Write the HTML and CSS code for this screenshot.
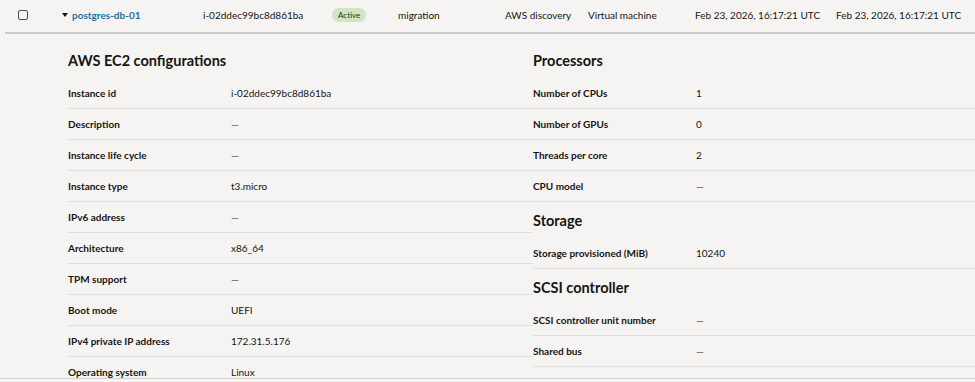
FILE: index.html
```html
<!DOCTYPE html>
<html lang="en">
  <head>
    <meta charset="UTF-8" />
    <meta name="viewport" content="width=device-width, initial-scale=1.0" />
    <title>Assets</title>

    <link rel="stylesheet" href="styles.css">
  </head>
  <body>
    <div class="asset-row">
      <span class="cell"><span class="checkbox"></span></span>
      <span class="cell name">
        <svg class="caret" width="6" height="4" viewBox="0 0 6 4"><path d="M0 0h6L3 4z" fill="#161513" /></svg>
        <a href="#">postgres-db-01</a>
      </span>
      <span class="cell">i-02ddec99bc8d861ba</span>
      <span class="cell"><span class="badge">Active</span></span>
      <span class="cell">migration</span>
      <span class="cell">AWS discovery</span>
      <span class="cell">Virtual machine</span>
      <span class="cell">Feb 23, 2026, 16:17:21 UTC</span>
      <span class="cell">Feb 23, 2026, 16:17:21 UTC</span>
    </div>

    <div class="details">
      <div class="column">
        <h2>AWS EC2 configurations</h2>
        <div class="prop"><span class="label">Instance id</span><span>i-02ddec99bc8d861ba</span></div>
        <div class="prop"><span class="label">Description</span><span class="dash">—</span></div>
        <div class="prop"><span class="label">Instance life cycle</span><span class="dash">—</span></div>
        <div class="prop"><span class="label">Instance type</span><span>t3.micro</span></div>
        <div class="prop"><span class="label">IPv6 address</span><span class="dash">—</span></div>
        <div class="prop"><span class="label">Architecture</span><span>x86_64</span></div>
        <div class="prop"><span class="label">TPM support</span><span class="dash">—</span></div>
        <div class="prop"><span class="label">Boot mode</span><span>UEFI</span></div>
        <div class="prop"><span class="label">IPv4 private IP address</span><span>172.31.5.176</span></div>
        <div class="prop"><span class="label">Operating system</span><span>Linux</span></div>
      </div>

      <div class="column">
        <h2>Processors</h2>
        <div class="prop"><span class="label">Number of CPUs</span><span>1</span></div>
        <div class="prop"><span class="label">Number of GPUs</span><span>0</span></div>
        <div class="prop"><span class="label">Threads per core</span><span>2</span></div>
        <div class="prop"><span class="label">CPU model</span><span class="dash">—</span></div>

        <h2>Storage</h2>
        <div class="prop"><span class="label">Storage provisioned (MiB)</span><span>10240</span></div>

        <h2>SCSI controller</h2>
        <div class="prop"><span class="label">SCSI controller unit number</span><span class="dash">—</span></div>
        <div class="prop"><span class="label">Shared bus</span><span class="dash">—</span></div>
      </div>
    </div>
  </body>
</html>
```

FILE: styles.css
```css
* {
  margin: 0;
  padding: 0;
  box-sizing: border-box;
}

body {
  font-family: Lato, 'Noto Sans', sans-serif;
  font-size: 10px;
  background-color: #f5f4f2;
  color: #161513;
  overflow: hidden;
}

/* top table row */
.asset-row {
  display: grid;
  grid-template-columns: 45px 140px 129px 66px 107px 83px 107px 141px 1fr;
  align-items: center;
  height: 34px;
  margin-left: 5px;
  padding-left: 13px;
  padding-bottom: 2px;
  border-bottom: 2px solid #cccac7;
  white-space: nowrap;
}

.checkbox {
  display: block;
  width: 10px;
  height: 10px;
  border: 1px solid #4f4d4a;
  border-radius: 2px;
}

.name {
  display: flex;
  align-items: center;
  gap: 4px;
  margin-left: -1px;

  & a {
    color: #1f6fa0;
    text-decoration: none;
    font-weight: 700;
  }
}

.badge {
  display: inline-block;
  padding: 2px 6px;
  border-radius: 8px;
  background-color: #d0e5c1;
  color: #233a1a;
  font-size: 8px;
}

/* expanded details */
.details {
  display: grid;
  grid-template-columns: 465px 1fr;
  height: 345px;
  padding: 8px 0 0 68px;
  border-bottom: 1px solid #d6d4d1;
  overflow: hidden;
}

h2 {
  height: 36px;
  display: flex;
  align-items: center;
  font-size: 14.5px;
  font-weight: 700;
  padding-top: 1px;
}

.prop {
  display: grid;
  grid-template-columns: 163px 1fr;
  align-items: center;
  height: 31px;
  border-bottom: 1px solid #e2e0dd;

  & .label {
    font-weight: 700;
  }

  & .dash {
    color: #555350;
  }
}
```
